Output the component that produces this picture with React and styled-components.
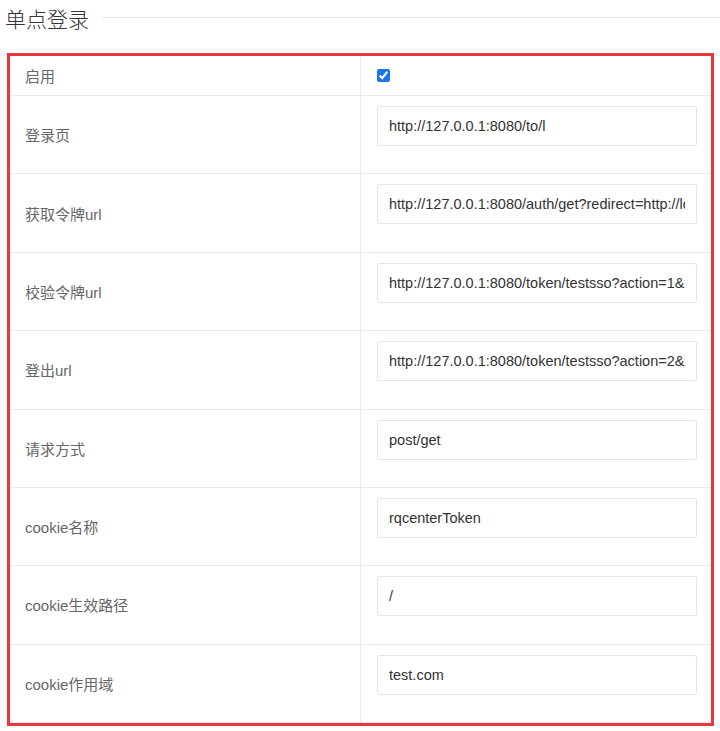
import React, { useState } from "react";
import styled, { createGlobalStyle } from "styled-components";

const GlobalStyle = createGlobalStyle`
  body {
    margin: 0;
    background: #fff;
    font-family: "Liberation Sans", "Noto Sans CJK SC", sans-serif;
  }
`;

const fields = [
  { label: "登录页", value: "http://127.0.0.1:8080/to/l" },
  { label: "获取令牌url", value: "http://127.0.0.1:8080/auth/get?redirect=http://localhost" },
  { label: "校验令牌url", value: "http://127.0.0.1:8080/token/testsso?action=1&token=" },
  { label: "登出url", value: "http://127.0.0.1:8080/token/testsso?action=2&token=" },
  { label: "请求方式", value: "post/get" },
  { label: "cookie名称", value: "rqcenterToken" },
  { label: "cookie生效路径", value: "/" },
  { label: "cookie作用域", value: "test.com" },
];

const App = () => {
  const [enabled, setEnabled] = useState(true);
  const [values, setValues] = useState(fields.map((f) => f.value));

  const change = (i, v) => {
    const copy = [...values];
    copy[i] = v;
    setValues(copy);
  };

  return (
    <>
      <GlobalStyle />
      <Page>
        <Heading>
          <HeadingText>单点登录</HeadingText>
          <HeadingLine />
        </Heading>
        <Frame>
          <Table>
            <Label small>启用</Label>
            <Cell small>
              <Check
                type="checkbox"
                checked={enabled}
                onChange={(e) => setEnabled(e.target.checked)}
              />
            </Cell>
            {fields.map((f, i) => (
              <React.Fragment key={f.label}>
                <Label>{f.label}</Label>
                <Cell>
                  <Field
                    type="text"
                    value={values[i]}
                    onChange={(e) => change(i, e.target.value)}
                  />
                </Cell>
              </React.Fragment>
            ))}
          </Table>
        </Frame>
      </Page>
    </>
  );
};

export default App;

const Page = styled.div`
  padding: 0 0 4px 5px;
  width: 715px;
`;

const Heading = styled.div`
  display: flex;
  align-items: center;
  height: 36px;
  margin-bottom: 17px;
`;

const HeadingText = styled.span`
  font-family: "Noto Sans CJK SC", sans-serif;
  font-size: 21px;
  font-weight: 300;
  color: #333;
  line-height: 36px;
  margin-top: -1px;
`;

const HeadingLine = styled.div`
  flex: 1;
  height: 1px;
  background: #e6e6e6;
  margin-left: 13px;
  margin-top: -2px;
`;

const Frame = styled.div`
  margin-left: 2px;
  width: 701px;
  border: 3px solid #e8383d;
`;

const Table = styled.div`
  display: grid;
  grid-template-columns: 351px 1fr;
`;

const Label = styled.div`
  display: flex;
  align-items: center;
  box-sizing: border-box;
  height: ${(p) => (p.small ? "40px" : "78.375px")};
  padding-left: 15px;
  border-bottom: 1px solid #ebebeb;
  border-right: 1px solid #ebebeb;
  font-family: "Liberation Sans", "Noto Sans CJK SC", sans-serif;
  font-size: 15px;
  color: #666;
`;

const Cell = styled.div`
  display: flex;
  align-items: ${(p) => (p.small ? "center" : "flex-start")};
  box-sizing: border-box;
  height: ${(p) => (p.small ? "40px" : "78.375px")};
  padding: ${(p) => (p.small ? "0 14px 0 13px" : "10px 14px 0 16px")};
  border-bottom: 1px solid #ebebeb;
`;

const Check = styled.input`
  width: 13px;
  height: 13px;
  margin: 0 0 0 3px;
  accent-color: #1a73e8;
`;

const Field = styled.input`
  box-sizing: border-box;
  width: 100%;
  height: 40px;
  padding: 0 11px;
  border: 1px solid #e6e6e6;
  border-radius: 2px;
  font-family: "Liberation Sans", sans-serif;
  font-size: 14.5px;
  color: #333;
  background: #fff;
  outline: none;
`;
